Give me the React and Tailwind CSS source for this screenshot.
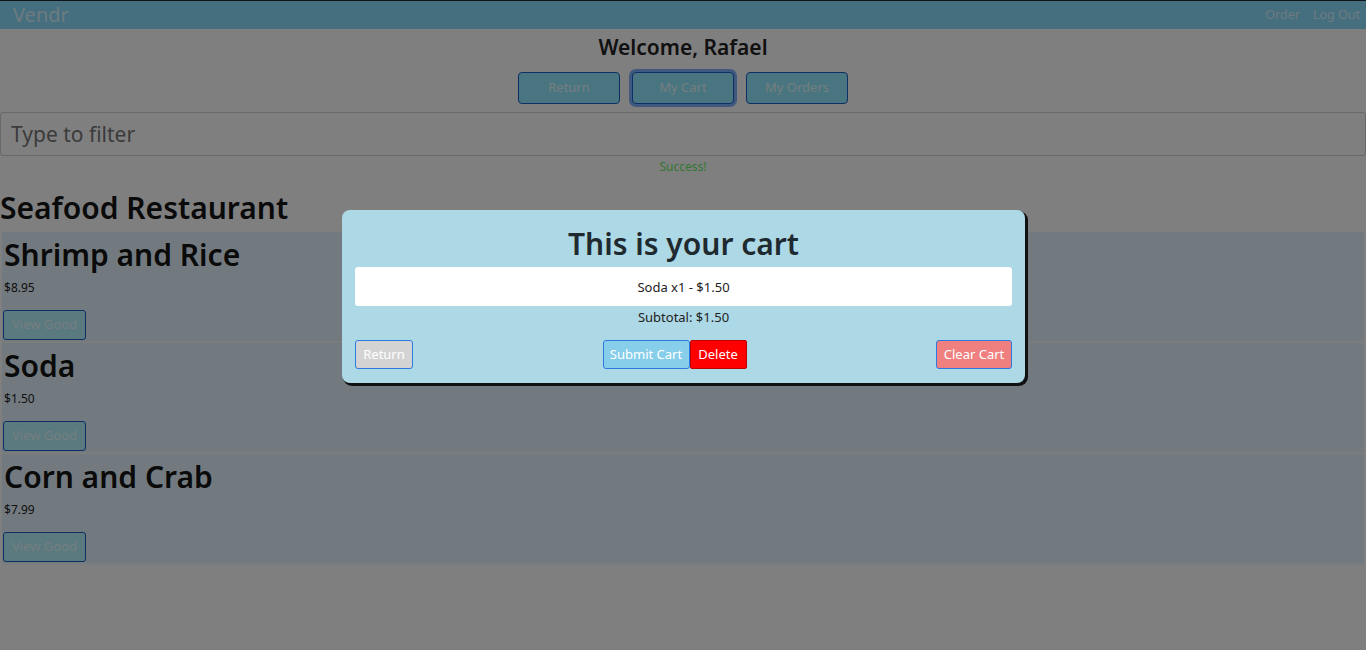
import { useState } from 'react';

const GOODS = [
  { id: 1, name: 'Shrimp and Rice', price: 8.95 },
  { id: 2, name: 'Soda', price: 1.5 },
  { id: 3, name: 'Corn and Crab', price: 7.99 },
];

const font = { fontFamily: '"Segoe UI", "Noto Sans", sans-serif' };

function NavButton({ children, active }) {
  return (
    <button
      className={`w-[102px] h-[32px] rounded-[4px] border border-[#1e5fc8] bg-[#90eaff] text-[13px] text-white/80 ${
        active ? 'ring-[3px] ring-[#4c8cff]/70' : ''
      }`}
    >
      {children}
    </button>
  );
}

function GoodRow({ good }) {
  return (
    <div className="mx-[2px] bg-[#e6f4ff] border-b-2 border-[#f4f8fb] pb-[1px]">
      <h2 className="text-[30px] leading-[44px] px-[2px] pt-[1px] font-semibold text-[#141414]">{good.name}</h2>
      <p className="text-[12px] leading-[16px] mt-[3px] px-[2px] text-[#222]">${good.price.toFixed(2)}</p>
      <button className="mt-[14px] ml-[1px] w-[83px] h-[30px] rounded-[3px] border border-[#1e5fc8] bg-[#b4f4ff] text-[13px] text-white/75">
        View Good
      </button>
    </div>
  );
}

export default function App() {
  const [filter, setFilter] = useState('');
  const cart = [{ name: 'Soda', qty: 1, price: 1.5 }];
  const subtotal = cart.reduce((s, c) => s + c.qty * c.price, 0);

  return (
    <div className="relative w-[1366px] h-[650px] bg-white overflow-hidden" style={font}>
      {/* navbar */}
      <div className="h-[29px] bg-[#8adfff] border-t border-[#1b2a33] flex items-center justify-between pl-[13px] pr-[6px]">
        <span className="text-[20px] leading-none text-white/70">Vendr</span>
        <div className="flex gap-[13px] text-[12.5px] text-white/70">
          <span>Order</span>
          <span>Log Out</span>
        </div>
      </div>

      <h1 className="text-center text-[21px] leading-[28px] font-semibold text-[#222] mt-[4px]">Welcome, Rafael</h1>

      <div className="flex justify-center gap-[12px] mt-[11px]">
        <NavButton>Return</NavButton>
        <NavButton active>My Cart</NavButton>
        <NavButton>My Orders</NavButton>
      </div>

      <input
        value={filter}
        onChange={e => setFilter(e.target.value)}
        placeholder="Type to filter"
        className="mt-[8px] block w-full h-[44px] rounded-[3px] border border-[#d0d0d0] bg-white px-[10px] text-[21px] placeholder:text-[#777] outline-none"
      />

      <p className="text-center text-[12px] leading-[16px] mt-[3px] text-[#66ee66]">Success!</p>

      <h2 className="text-[30px] leading-[40px] font-semibold text-[#141414] mt-[13px] mb-[4px]">Seafood Restaurant</h2>
      <div className="flex flex-col">
        {GOODS.map(g => (
          <GoodRow key={g.id} good={g} />
        ))}
      </div>

      {/* modal backdrop */}
      <div className="absolute inset-0 bg-black/50" />

      {/* modal */}
      <div className="absolute left-[342px] top-[210px] w-[683px] h-[173px] rounded-[8px] bg-[#add8e6] shadow-[2px_2px_0_1px_#111] px-[13px] pt-[14px]">
        <h2 className="text-center text-[30px] leading-[40px] font-semibold text-[#1f2a30]">This is your cart</h2>
        <div className="mt-[3px] h-[39px] pt-[2px] rounded-[3px] bg-white flex items-center justify-center text-[13px] text-[#222]">
          {cart.map(c => (
            <span key={c.name}>
              {c.name} x{c.qty} - ${(c.qty * c.price).toFixed(2)}
            </span>
          ))}
        </div>
        <p className="text-center text-[13px] leading-[18px] mt-[2px] text-[#222]">Subtotal: ${subtotal.toFixed(2)}</p>
        <div className="mt-[14px] flex items-center justify-between">
          <button className="w-[58px] h-[29px] rounded-[3px] border border-[#2a7ae2] bg-[#d3d3d3] text-[13px] text-white">
            Return
          </button>
          <div className="flex">
            <button className="w-[87px] h-[29px] rounded-[3px] border border-[#2a7ae2] bg-[#87ceeb] text-[13px] text-white">
              Submit Cart
            </button>
            <button className="w-[57px] h-[29px] rounded-[2px] border border-[#b00] bg-[#ff0000] text-[13px] text-white">
              Delete
            </button>
          </div>
          <button className="w-[76px] h-[29px] rounded-[3px] border border-[#2a7ae2] bg-[#f08080] text-[13px] text-white">
            Clear Cart
          </button>
        </div>
      </div>
    </div>
  );
}
